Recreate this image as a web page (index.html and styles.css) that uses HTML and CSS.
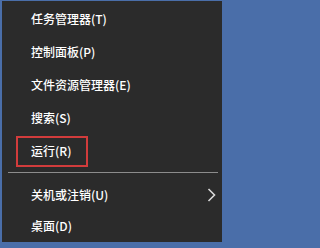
FILE: index.html
```html
<!DOCTYPE html>
<html lang="zh-CN">
<head>
<meta charset="utf-8">
<title>WinX menu</title>
<link rel="stylesheet" href="styles.css">
</head>
<body>
<div class="menu">
  <div class="item">任务管理器(T)</div>
  <div class="item">控制面板(P)</div>
  <div class="item">文件资源管理器(E)</div>
  <div class="item">搜索(S)</div>
  <div class="item item-marked">运行(R)<span class="mark"></span></div>
  <div class="sep"></div>
  <div class="item item-sub">关机或注销(U)
    <svg class="chev" width="9" height="14" viewBox="0 0 9 14"><polyline points="1.5,1 7.5,7 1.5,13" fill="none" stroke="#d8d8d8" stroke-width="1.6"/></svg>
  </div>
  <div class="item item-last">桌面(D)</div>
</div>
</body>
</html>
```
FILE: styles.css
```css
html, body {
  margin: 0;
  padding: 0;
}
html {
  background: #4a6ea9;
}
body {
  width: 225px;
  height: 248px;
  background: #4a6ea9;
  overflow: hidden;
  font-family: "Noto Sans CJK SC", "Noto Sans", sans-serif;
}
.menu {
  margin: 1px 0 0 2px;
  width: 220px;
  height: 241px;
  box-sizing: border-box;
  padding-top: 1px;
  background: #2b2b2b;
  display: flex;
  flex-direction: column;
}
.item {
  position: relative;
  height: 33px;
  display: flex;
  align-items: center;
  padding-left: 29px;
  color: #ffffff;
  font-size: 12px;
  font-weight: 500;
  line-height: 1;
}
.item-sub {
  height: 32px;
  padding-right: 6px;
  justify-content: space-between;
}
.item-last {
  height: 30px;
}
.mark {
  position: absolute;
  left: 14px;
  top: 2px;
  width: 72px;
  height: 31px;
  box-sizing: border-box;
  border: 2px solid #d23c3c;
}
.sep {
  height: 1px;
  margin: 5px 4px 6px 6px;
  background: #8c8c8c;
}
.chev {
  display: block;
}
```
